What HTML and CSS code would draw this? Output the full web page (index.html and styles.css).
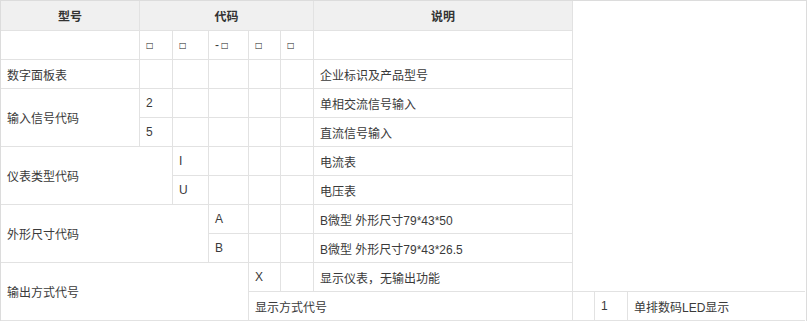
FILE: index.html
```html
<!DOCTYPE html>
<html lang="zh-CN">
<head>
<meta charset="utf-8">
<title>型号说明</title>
<link rel="stylesheet" href="styles.css">
</head>
<body>
<div class="spec">
  <div class="c hd">型号</div>
  <div class="c hd s5">代码</div>
  <div class="c hd">说明</div>
  <div class="fill"></div>

  <div class="c"></div>
  <div class="c"><span class="box">□</span></div>
  <div class="c"><span class="box">□</span></div>
  <div class="c">-<span class="box gap">□</span></div>
  <div class="c"><span class="box">□</span></div>
  <div class="c"><span class="box">□</span></div>
  <div class="c"></div>
  <div class="fill"></div>

  <div class="c">数字面板表</div>
  <div class="c"></div>
  <div class="c"></div>
  <div class="c"></div>
  <div class="c"></div>
  <div class="c"></div>
  <div class="c">企业标识及产品型号</div>
  <div class="fill"></div>

  <div class="c r2">输入信号代码</div>
  <div class="c">2</div>
  <div class="c"></div>
  <div class="c"></div>
  <div class="c"></div>
  <div class="c"></div>
  <div class="c">单相交流信号输入</div>
  <div class="fill"></div>

  <div class="c">5</div>
  <div class="c"></div>
  <div class="c"></div>
  <div class="c"></div>
  <div class="c"></div>
  <div class="c">直流信号输入</div>
  <div class="fill"></div>

  <div class="c s2 r2">仪表类型代码</div>
  <div class="c">I</div>
  <div class="c"></div>
  <div class="c"></div>
  <div class="c"></div>
  <div class="c">电流表</div>
  <div class="fill"></div>

  <div class="c">U</div>
  <div class="c"></div>
  <div class="c"></div>
  <div class="c"></div>
  <div class="c">电压表</div>
  <div class="fill"></div>

  <div class="c s3 r2">外形尺寸代码</div>
  <div class="c">A</div>
  <div class="c"></div>
  <div class="c"></div>
  <div class="c">B微型 外形尺寸79*43*50</div>
  <div class="fill"></div>

  <div class="c">B</div>
  <div class="c"></div>
  <div class="c"></div>
  <div class="c">B微型 外形尺寸79*43*26.5</div>
  <div class="fill"></div>

  <div class="c s4 r2">输出方式代号</div>
  <div class="c">X</div>
  <div class="c"></div>
  <div class="c">显示仪表，无输出功能</div>
  <div class="fill fill-b"></div>

  <div class="c s3">显示方式代号</div>
  <div class="c"></div>
  <div class="c">1</div>
  <div class="c last">单排数码LED显示</div>
</div>
</body>
</html>
```
FILE: styles.css
```css
html, body {
  margin: 0;
  padding: 0;
  background: #ffffff;
}

.spec {
  display: grid;
  width: 807px;
  box-sizing: border-box;
  grid-template-columns: 139px 33px 36px 40px 32px 33px 259px 22px 33px 177px;
  grid-template-rows: 30px repeat(10, 29px);
  border-top: 1px solid #dcdcdc;
  border-left: 1px solid #dcdcdc;
  border-right: 1px solid #dcdcdc;
  font-family: "Liberation Sans", "Noto Sans CJK SC", sans-serif;
  font-size: 12px;
  color: #3a3a3a;
}

.c {
  box-sizing: border-box;
  border-right: 1px solid #e2e2e2;
  border-bottom: 1px solid #e2e2e2;
  padding-left: 6px;
  display: flex;
  align-items: center;
  white-space: nowrap;
  overflow: hidden;
}

.c.last {
  border-right: none;
}

.hd {
  background: #f0f0f0;
  justify-content: center;
  padding-left: 0;
  font-weight: bold;
  color: #333333;
}

.s2 { grid-column: span 2; }
.s3 { grid-column: span 3; }
.s4 { grid-column: span 4; }
.s5 { grid-column: span 5; }
.r2 { grid-row: span 2; }

.fill {
  grid-column: span 3;
}

.fill-b {
  border-bottom: 1px solid #e2e2e2;
}

.box {
  font-family: "DejaVu Sans", sans-serif;
  font-size: 8px;
  font-weight: bold;
  color: #222222;
}

.box.gap {
  margin-left: 2px;
}
```
